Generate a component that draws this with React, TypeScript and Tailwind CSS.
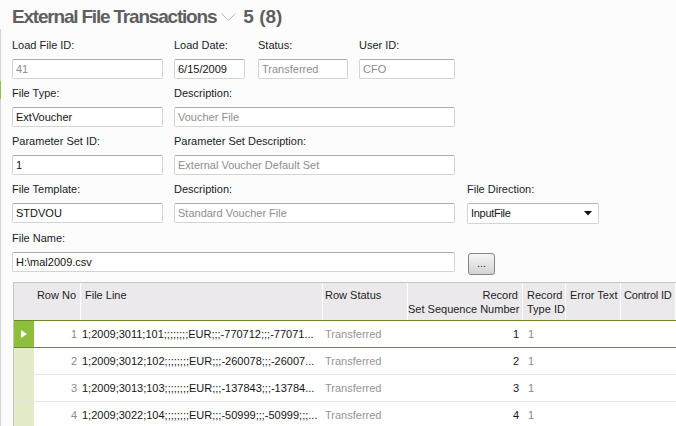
const rows = [
  { no: 1, line: "1;2009;3011;101;;;;;;;;EUR;;;-770712;;;-77071...", seq: 1 },
  { no: 2, line: "1;2009;3012;102;;;;;;;;EUR;;;-260078;;;-26007...", seq: 2 },
  { no: 3, line: "1;2009;3013;103;;;;;;;;EUR;;;-137843;;;-13784...", seq: 3 },
  { no: 4, line: "1;2009;3022;104;;;;;;;;EUR;;;-50999;;;-50999;;;...", seq: 4 },
];

const Field = ({
  label,
  value,
  width,
  muted,
}: {
  label: string;
  value: string;
  width: string;
  muted?: boolean;
}) => (
  <div className={`flex flex-col ${width}`}>
    <div className="h-[14px] leading-[14px] text-[11px] text-[#1c1c2a] whitespace-nowrap">{label}</div>
    <div
      className={`mt-[7px] h-[20px] flex items-center px-[3px] bg-white border border-[#d4d4d6] border-t-[#acacae] rounded-[2px] text-[11px] whitespace-nowrap ${
        muted ? "text-[#8e8e8e]" : "text-[#141414]"
      }`}
    >
      {value}
    </div>
  </div>
);

const cols = "grid grid-cols-[20px_47px_242px_85px_115px_43px_55px_1fr]";

export default function App() {
  return (
    <div className="w-[676px] h-[426px] overflow-hidden bg-[#fbfcfb] flex font-['Liberation_Sans',Arial,sans-serif]">
      {/* thin sidebar edge */}
      <div className="w-px flex flex-col shrink-0">
        <div className="h-[29px]" />
        <div className="h-[52px] bg-[#d6d6d6]" />
        <div className="h-[18px] bg-[#8dc63f]" />
        <div className="flex-1 bg-[#d6d6d6]" />
      </div>

      <div className="flex-1 flex flex-col pl-[11px] pt-[3px]">
        <div className="h-[28px] flex items-center leading-[28px]">
          <span className="text-[19px] font-bold tracking-[-1.2px] text-[#5f5f5f]">External File Transactions</span>
          <svg width="15" height="9" viewBox="0 0 15 9" className="ml-[5px] mt-[1px]">
            <polyline points="0.5,0.5 7.5,7.5 14.5,0.5" fill="none" stroke="#b9b9b9" strokeWidth="1" />
          </svg>
          <span className="ml-[7px] text-[19px] font-bold text-[#5f5f5f]">5 (8)</span>
        </div>

        <div className="mt-[7px] flex flex-col gap-[7px]">
          <div className="flex">
            <Field label="Load File ID:" value="41" width="w-[151px]" muted />
            <Field label="Load Date:" value="6/15/2009" width="w-[71px] ml-[11px]" />
            <Field label="Status:" value="Transferred" width="w-[90px] ml-[13px]" muted />
            <Field label="User ID:" value="CFO" width="w-[96px] ml-[11px]" muted />
          </div>
          <div className="flex">
            <Field label="File Type:" value="ExtVoucher" width="w-[151px]" />
            <Field label="Description:" value="Voucher File" width="w-[281px] ml-[11px]" muted />
          </div>
          <div className="flex">
            <Field label="Parameter Set ID:" value="1" width="w-[151px]" />
            <Field label="Parameter Set Description:" value="External Voucher Default Set" width="w-[281px] ml-[11px]" muted />
          </div>
          <div className="flex">
            <Field label="File Template:" value="STDVOU" width="w-[151px]" />
            <Field label="Description:" value="Standard Voucher File" width="w-[281px] ml-[11px]" muted />
            <div className="flex flex-col w-[132px] ml-[12px]">
              <div className="h-[14px] leading-[14px] text-[11px] text-[#1c1c2a]">File Direction:</div>
              <div className="mt-[7px] h-[21px] flex items-center justify-between px-[3px] bg-white border border-[#d4d4d6] border-t-[#b4b4b6] rounded-[2px] text-[11px] text-[#141414]">
                <span className="tracking-[-0.3px]">InputFile</span>
                <svg width="8" height="5" viewBox="0 0 8 5" className="mr-[3px]">
                  <polygon points="0,0 8,0 4,4.5" fill="#111" />
                </svg>
              </div>
            </div>
          </div>
          <div className="flex items-start">
            <Field label="File Name:" value="H:\mal2009.csv" width="w-[443px]" />
            <button className="mt-[22px] ml-[13px] w-[27px] h-[22px] rounded-[3px] border border-[#858585] bg-gradient-to-b from-[#f6f6f6] to-[#d3d3d3] text-[11px] leading-none text-[#222] flex items-end justify-center pb-[5px]">
              ...
            </button>
          </div>
        </div>

        <div className="mt-[7px] ml-[1px] flex-1 border-l border-t border-[#c6c6c6] text-[11px]">
          <div className={`${cols} h-[38px] bg-[#ebe9ec] border-b border-[#6b8a2c] text-[#1e1e1e] leading-[14px]`}>
            <div />
            <div className="border-r border-white pr-[4px] pt-[5px] text-right whitespace-nowrap">Row No</div>
            <div className="border-r border-white pl-[4px] pt-[5px]">File Line</div>
            <div className="border-r border-white pl-[2px] pt-[5px] whitespace-nowrap">Row Status</div>
            <div className="border-r border-white pr-[4px] pt-[5px] text-right whitespace-nowrap">
              Record
              <br />
              Set Sequence Number
            </div>
            <div className="border-r border-white pl-[4px] pt-[5px] whitespace-nowrap">
              Record
              <br />
              Type ID
            </div>
            <div className="border-r border-white pl-[4px] pt-[5px] whitespace-nowrap">Error Text</div>
            <div className="border-r border-white pl-[3px] pt-[5px] whitespace-nowrap tracking-[-0.2px]">Control ID</div>
          </div>

          {rows.map((r, i) => (
            <div
              key={r.no}
              className={`${cols} h-[27px] items-stretch border-b ${
                i === 0 ? "border-[#6b8a2c]" : "border-[#e6e6e6]"
              }`}
            >
              <div className={`flex items-center justify-center ${i === 0 ? "bg-[#8dbf3c]" : "bg-[#e3ecc9]"}`}>
                {i === 0 && (
                  <svg width="6" height="8" viewBox="0 0 6 8">
                    <polygon points="0,0 6,4 0,8" fill="#fff" />
                  </svg>
                )}
              </div>
              <div className="bg-white flex items-center justify-end pr-[4px] text-[#8a8a8a]">{r.no}</div>
              <div className="bg-white flex items-center pl-[1px] text-[#161616] whitespace-nowrap overflow-hidden">
                {r.line}
              </div>
              <div className="bg-white flex items-center pl-[2px] text-[#959595]">Transferred</div>
              <div className="bg-white flex items-center justify-end pr-[4px] text-[#161616]">{r.seq}</div>
              <div className="bg-white flex items-center pl-[5px] text-[#8a8a8a]">1</div>
              <div className="bg-white" />
              <div className="bg-white" />
            </div>
          ))}
        </div>
      </div>
    </div>
  );
}
